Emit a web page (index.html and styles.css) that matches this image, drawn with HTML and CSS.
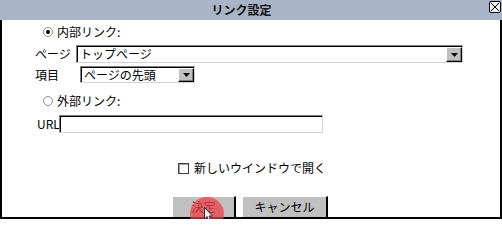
FILE: index.html
```html
<!DOCTYPE html>
<html lang="ja">
<head>
<meta charset="utf-8">
<title>リンク設定</title>
<link rel="stylesheet" href="styles.css">
</head>
<body>
<div class="dialog">
  <div class="titlebar">
    <span class="title">リンク設定</span>
    <svg class="close" width="12" height="12" viewBox="0 0 12 12">
      <rect x="0.5" y="0.5" width="11" height="11" rx="1.5" fill="#eef0f4" stroke="#000"/>
      <path d="M2 2 L10 10 M10 2 L2 10" stroke="#000" stroke-width="1"/>
    </svg>
  </div>
  <div class="body">
    <div class="row r1 radio-row">
      <svg class="radio" width="10" height="10" viewBox="0 0 10 10">
        <circle cx="5" cy="5" r="4.5" fill="#fff" stroke="#8a8a8a"/>
        <circle cx="5" cy="5" r="2" fill="#000"/>
      </svg>
      <span>内部リンク:</span>
    </div>
    <div class="row r2">
      <span class="lbl lbl-page">ページ</span>
      <div class="select sel-page">
        <span class="sel-text">トップページ</span>
        <span class="drop"><svg width="7" height="4" viewBox="0 0 7 4"><path d="M0 0 H7 L3.5 4 Z" fill="#000"/></svg></span>
      </div>
    </div>
    <div class="row r3">
      <span class="lbl lbl-item">項目</span>
      <div class="select sel-item">
        <span class="sel-text">ページの先頭</span>
        <span class="drop"><svg width="7" height="4" viewBox="0 0 7 4"><path d="M0 0 H7 L3.5 4 Z" fill="#000"/></svg></span>
      </div>
    </div>
    <div class="row r4 radio-row">
      <svg class="radio" width="10" height="10" viewBox="0 0 10 10">
        <circle cx="5" cy="5" r="4.5" fill="#fff" stroke="#8a8a8a"/>
      </svg>
      <span>外部リンク:</span>
    </div>
    <div class="row r5">
      <span class="lbl lbl-url">URL</span>
      <div class="input"></div>
    </div>
    <div class="row r6 check-row">
      <span class="checkbox"></span>
      <span>新しいウインドウで開く</span>
    </div>
    <div class="row buttons">
      <div class="btn btn-ok">決定</div>
      <div class="btn btn-cancel">キャンセル</div>
    </div>
  </div>
  <div class="tap"></div>
  <svg class="cursor" width="10" height="16" viewBox="0 0 10 16">
    <path d="M0.5 0.5 L0.5 12 L3 9.5 L5 14.5 L7 13.7 L5 9 L8.5 9 Z" fill="#f4f4f4" stroke="#333" stroke-width="1" stroke-linejoin="round"/>
  </svg>
</div>
</body>
</html>
```

FILE: styles.css
```css
* { box-sizing: border-box; }
html, body {
  margin: 0;
  padding: 0;
  background: #fff;
}
body {
  font-family: "Noto Sans CJK JP", "Noto Sans", sans-serif;
  font-size: 12px;
  color: #000;
}
.dialog {
  position: relative;
  width: 502px;
  height: 219px;
  overflow: hidden;
}
.titlebar {
  display: flex;
  align-items: flex-start;
  height: 20px;
  background: #a9b5c7;
  padding: 1px 1px 0 0;
}
.title {
  flex: 1;
  text-align: center;
  font-weight: bold;
  font-size: 12px;
  line-height: 18px;
  color: #111;
  padding-right: 6px;
}
.close { display: block; flex: none; }
.body {
  height: 199px;
  border-left: 2px solid #000;
  border-right: 2px solid #000;
  border-bottom: 2px solid #000;
  overflow: hidden;
  padding-left: 33px;
}
.row {
  display: flex;
  align-items: center;
  line-height: 14px;
}
.radio-row { padding-left: 8px; }
.radio { display: block; margin-right: 4px; flex: none; }
.r1 { margin-top: 4px; height: 16px; }
.r2 { margin-top: 5px; height: 18px; }
.r3 { margin-top: 3px; height: 17px; }
.r4 { margin-top: 10px; height: 16px; }
.r5 { margin-top: 6px; height: 18px; }
.r6 { margin-top: 27px; height: 16px; justify-content: center; padding-right: 31px; }
.buttons { margin-top: 20px; height: 24px; justify-content: center; gap: 6px; padding-right: 35px; align-items: flex-start; }

.lbl { flex: none; }
.lbl-page { width: 41px; }
.lbl-item { width: 45px; }
.lbl-url { width: 24px; padding-left: 2px; }

.select {
  display: flex;
  align-items: stretch;
  height: 100%;
  border-top: 1px solid #808080;
  border-left: 1px solid #808080;
  border-right: 1px solid #d4d4d4;
  border-bottom: 1px solid #d4d4d4;
  box-shadow: inset 1px 1px 0 #000;
  background: #fff;
}
.sel-page { width: 387px; }
.sel-item { width: 115px; }
.sel-text {
  flex: 1;
  padding-left: 3px;
  padding-top: 1px;
  line-height: 14px;
  white-space: nowrap;
}
.drop {
  flex: none;
  width: 16px;
  margin: 1px 0 0 0;
  display: flex;
  align-items: center;
  justify-content: center;
  background: #c0c0c0;
  border-top: 1px solid #fff;
  border-left: 1px solid #fff;
  border-right: 1px solid #000;
  border-bottom: 1px solid #000;
  box-shadow: inset -1px -1px 0 #808080;
}
.drop svg { display: block; }

.input {
  width: 264px;
  height: 100%;
  border-top: 1px solid #808080;
  border-left: 1px solid #808080;
  border-right: 1px solid #d4d4d4;
  border-bottom: 1px solid #d4d4d4;
  box-shadow: inset 1px 1px 0 #000;
  background: #fff;
}

.checkbox {
  width: 11px;
  height: 11px;
  border: 1px solid #404040;
  box-shadow: inset 1px 1px 0 #a0a0a0;
  background: #fff;
  margin-right: 5px;
  flex: none;
}

.btn {
  height: 24px;
  background: #c0c0c0;
  border-top: 1px solid #fff;
  border-left: 1px solid #fff;
  border-right: 2px solid #000;
  text-align: center;
  line-height: 20px;
  font-size: 12px;
}
.btn-ok { width: 64px; color: #222; }
.btn-cancel { width: 86px; }

.tap {
  position: absolute;
  left: 190px;
  top: 197px;
  width: 34px;
  height: 34px;
  border-radius: 50%;
  background: rgba(238, 60, 70, 0.72);
}
.cursor {
  position: absolute;
  left: 204px;
  top: 207px;
}
```
